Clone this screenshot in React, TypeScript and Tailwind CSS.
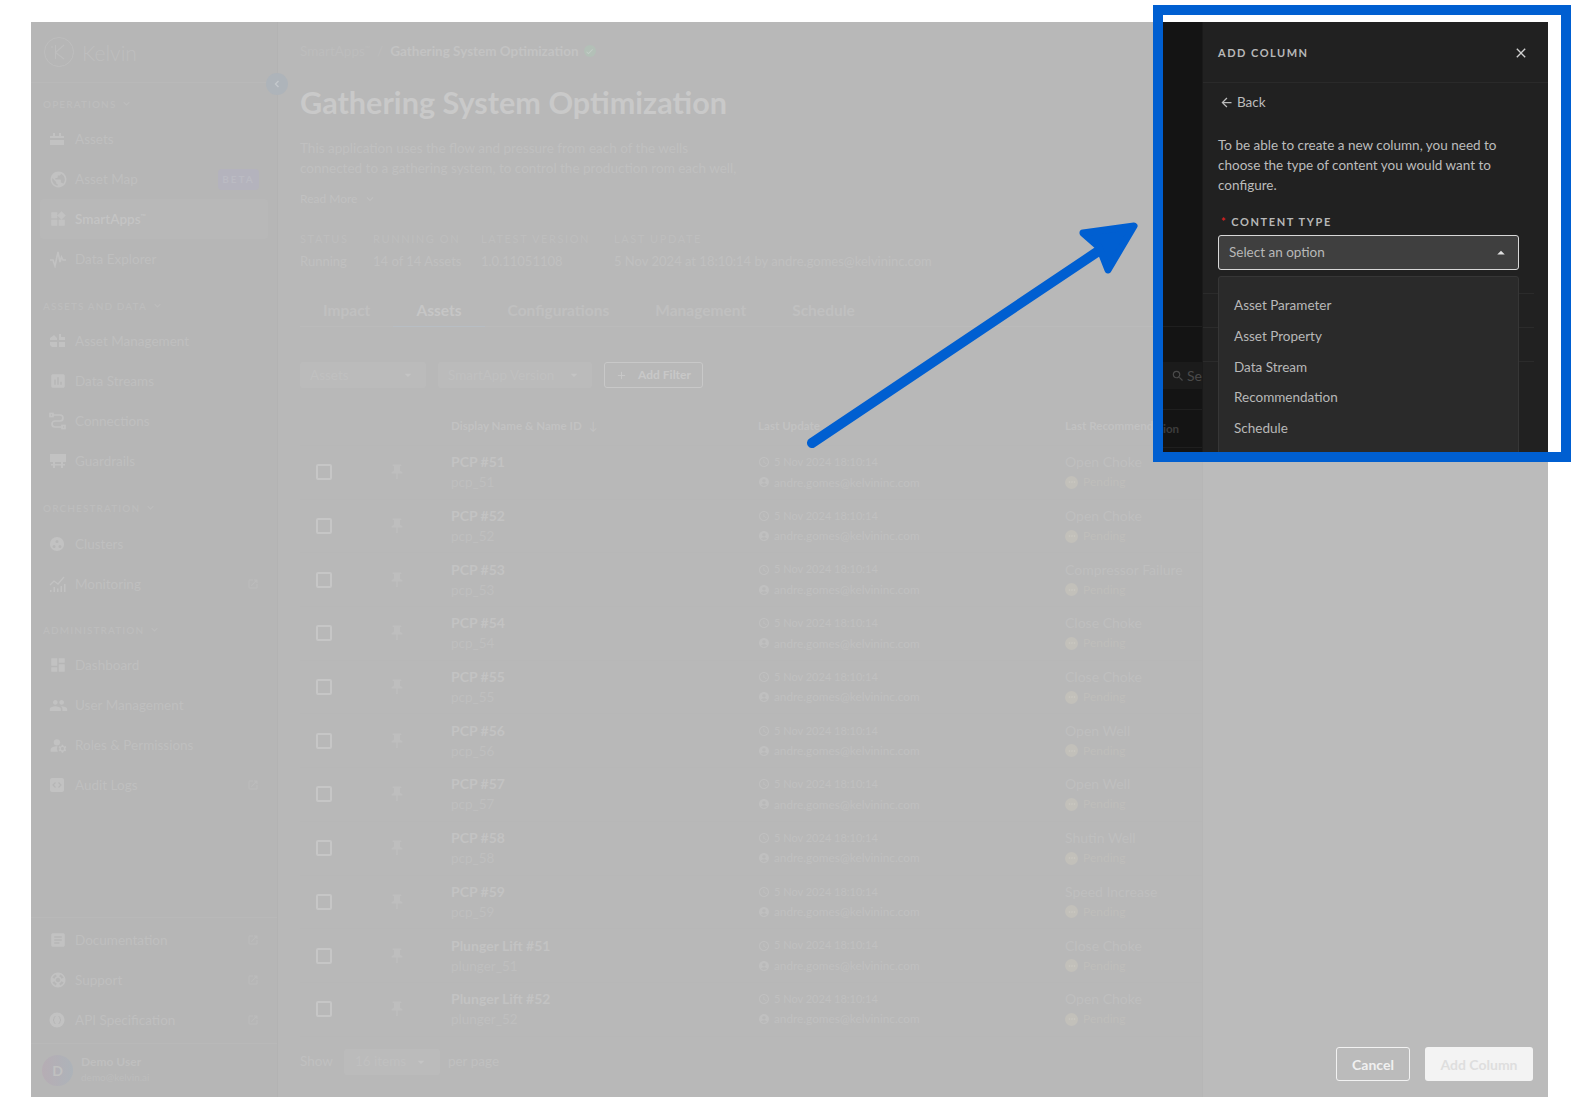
import React from "react";
import {
  MdAccountCircle,
  MdArrowBack,
  MdArrowDropDown,
  MdArrowDropUp,
  MdArticle,
  MdCheck,
  MdClose,
  MdDashboard,
  MdExpandMore,
  MdInsertChart,
  MdManageAccounts,
  MdMoreHoriz,
  MdOpenInNew,
  MdPeople,
  MdPublic,
  MdPushPin,
  MdSchedule,
  MdSearch,
  MdSupport,
  MdWidgets,
} from "react-icons/md";
import { Plus } from "lucide-react";

const FONT = "font-['Lato','Liberation_Sans',sans-serif]";

// ─── ICONS ────────────────────────────────────────────────────────────────────

function AssetsIcon() {
  return (
    <svg viewBox="0 0 16 16" className="h-4 w-4 fill-current">
      <path d="M1 7V5h3V2h2v3h4V2h2v3h3v2H1zM1 9h14v5H1V9z" />
    </svg>
  );
}

function PulseIcon() {
  return (
    <svg viewBox="0 0 18 18" className="h-[18px] w-[18px] fill-none stroke-current" strokeWidth="1.6">
      <path d="M1 10h3l2 6 3-14 2 10 1.5-5 1.5 3h3" />
    </svg>
  );
}

function AssetManagementIcon() {
  return (
    <svg viewBox="0 0 18 18" className="h-[18px] w-[18px] fill-current">
      <path d="M5 3l3 3v2H1V6l4-3zM1 10h7v5H3l-2-2v-3zM10 2h2v3h4v3h-6V2zM10 10h6v5h-6v-5z" />
    </svg>
  );
}

function ConnectionsIcon() {
  return (
    <svg viewBox="0 0 18 18" className="h-[18px] w-[18px] fill-none stroke-current" strokeWidth="1.7">
      <path d="M3 3h8a2.5 2.5 0 0 1 0 6H6a2.5 2.5 0 0 0 0 6h8" />
      <rect x="1" y="1.5" width="3" height="3" />
      <rect x="13" y="13.5" width="3" height="3" />
    </svg>
  );
}

function GuardrailIcon() {
  return (
    <svg viewBox="0 0 18 18" className="h-[18px] w-[18px] fill-current">
      <path d="M1 2h16v8H1V2zM4 10h2v6H4v-6zM12 10h2v6h-2v-6zM2 12h14v1.5H2V12z" />
    </svg>
  );
}

function ClustersIcon() {
  return (
    <svg viewBox="0 0 18 18" className="h-4 w-4 fill-current">
      <path
        fillRule="evenodd"
        d="M9 1a8 8 0 1 1 0 16A8 8 0 0 1 9 1zm0 3.5a1.7 1.7 0 1 0 0 3.4 1.7 1.7 0 0 0 0-3.4zM5.7 10a1.7 1.7 0 1 0 0 3.4 1.7 1.7 0 0 0 0-3.4zm6.6 0a1.7 1.7 0 1 0 0 3.4 1.7 1.7 0 0 0 0-3.4z"
      />
    </svg>
  );
}

function MonitoringIcon() {
  return (
    <svg viewBox="0 0 18 18" className="h-[18px] w-[18px] fill-current">
      <path d="M1 15h1.5v2H1v-2zM4.5 12H6v5H4.5v-5zM8 13.5h1.5V17H8v-3.500zM11.500 11H13v6h-1.500v-6zM15 9h1.500v8H15V9z" />
      <path d="M1 10l4-4 4 3 6-7" fill="none" stroke="currentColor" strokeWidth="1.300" />
    </svg>
  );
}

function CodeBoxIcon() {
  return (
    <svg viewBox="0 0 16 16" className="h-4 w-4">
      <rect x="1" y="1" width="14" height="14" rx="2" fill="currentColor" />
      <path d="M6.500 5.500L4 8l2.500 2.500M9.500 5.500L12 8l-2.500 2.500" fill="none" stroke="#b6b6b6" strokeWidth="1.200" />
    </svg>
  );
}

function ApiIcon() {
  return (
    <svg viewBox="0 0 16 16" className="h-4 w-4">
      <circle cx="8" cy="8" r="7.500" fill="currentColor" />
      <path d="M6.500 4.500Q5 4.500 5 6v1.200L4 8l1 .8V10q0 1.500 1.500 1.500M9.500 4.500Q11 4.500 11 6v1.200L12 8l-1 .8V10q0 1.500-1.500 1.500" fill="none" stroke="#b6b6b6" strokeWidth="1" />
    </svg>
  );
}

function KelvinLogo() {
  return (
    <div className="flex items-center gap-[8px] text-[#bebebe]">
      <svg viewBox="0 0 30 30" className="h-[30px] w-[30px] fill-none stroke-current" strokeWidth="0.9">
        <circle cx="15" cy="15" r="14.500" />
        <path d="M11.500 8v14M20 8l-8.500 7.500L20 22" strokeWidth="1.100" />
        <circle cx="8" cy="10" r="0.500" />
      </svg>
      <span className="text-[21px] leading-none font-light">Kelvin</span>
    </div>
  );
}

function TradeMark() {
  return <span className="align-super text-[7px] leading-none">™</span>;
}

// ─── SIDEBAR ──────────────────────────────────────────────────────────────────

interface NavItem {
  label: string;
  icon: React.ReactNode;
  external?: boolean;
  beta?: boolean;
  active?: boolean;
}

const NAV_GROUPS: { title: string; head: string; items: NavItem[] }[] = [
  {
    title: "OPERATIONS",
    head: "h-[36px] pt-[14px]",
    items: [
      { label: "Assets", icon: <AssetsIcon /> },
      { label: "Asset Map", icon: <MdPublic size={19} />, beta: true },
      { label: "SmartApps", icon: <MdWidgets size={18} />, active: true },
      { label: "Data Explorer", icon: <PulseIcon /> },
    ],
  },
  {
    title: "ASSETS AND DATA",
    head: "h-[42px] pt-[20px]",
    items: [
      { label: "Asset Management", icon: <AssetManagementIcon /> },
      { label: "Data Streams", icon: <MdInsertChart size={18} /> },
      { label: "Connections", icon: <ConnectionsIcon /> },
      { label: "Guardrails", icon: <GuardrailIcon /> },
    ],
  },
  {
    title: "ORCHESTRATION",
    head: "h-[43px] pt-[20px]",
    items: [
      { label: "Clusters", icon: <ClustersIcon /> },
      { label: "Monitoring", icon: <MonitoringIcon />, external: true },
    ],
  },
  {
    title: "ADMINISTRATION",
    head: "h-[41px] pt-[19px]",
    items: [
      { label: "Dashboard", icon: <MdDashboard size={18} /> },
      { label: "User Management", icon: <MdPeople size={19} /> },
      { label: "Roles & Permissions", icon: <MdManageAccounts size={19} /> },
      { label: "Audit Logs", icon: <CodeBoxIcon />, external: true },
    ],
  },
];

const FOOTER_ITEMS: NavItem[] = [
  { label: "Documentation", icon: <MdArticle size={18} />, external: true },
  { label: "Support", icon: <MdSupport size={18} />, external: true },
  { label: "API Specification", icon: <ApiIcon />, external: true },
];

function NavRow({ item }: { item: NavItem }) {
  return (
    <div
      className={`mx-[9px] flex h-10 items-center pl-[9px] pr-[9px] ${
        item.active ? "rounded bg-[#b8b8b8] text-[#c4c4c4]" : "text-[#bfbfbf]"
      }`}
    >
      <span className="flex w-[26px] shrink-0 text-[#c2c2c2]">{item.icon}</span>
      <span className={`text-[13.5px] ${item.active ? "font-semibold" : ""}`}>
        {item.label}
        {item.active && <TradeMark />}
      </span>
      {item.beta && (
        <span className="ml-auto flex h-[21px] w-[41px] items-center justify-center rounded bg-[#b4b3bd] text-[10px] font-bold tracking-[2px] text-[#bbbbc3]">
          BETA
        </span>
      )}
      {item.external && <MdOpenInNew size={12} className="ml-auto text-[#bcbcbc]" />}
    </div>
  );
}

function Sidebar() {
  return (
    <aside className="flex h-full w-[247px] shrink-0 flex-col border-r border-[#b3b3b3] bg-[#b6b6b6]">
      <div className="flex h-[61px] shrink-0 items-center border-b border-[#b9b9b9] pl-[13px]">
        <KelvinLogo />
      </div>
      {NAV_GROUPS.map((group) => (
        <div key={group.title}>
          <div className={`${group.head} pl-[12px]`}>
            <div className="flex items-center gap-1 text-[10px] leading-3 font-semibold tracking-[1.1px] text-[#bdbdbd]">
              {group.title}
              <MdExpandMore size={13} />
            </div>
          </div>
          {group.items.map((item) => (
            <NavRow key={item.label} item={item} />
          ))}
        </div>
      ))}
      <div className="mt-auto border-t border-[#b9b9b9] pt-[2px]">
        {FOOTER_ITEMS.map((item) => (
          <NavRow key={item.label} item={item} />
        ))}
      </div>
      <div className="mt-[3px] flex h-[54px] items-center gap-2 border-t border-[#b9b9b9] pl-[11px]">
        <span className="flex h-[31px] w-[31px] items-center justify-center rounded-full bg-gradient-to-r from-[#b6adb4] to-[#adb3b9] text-[14px] font-bold text-[#c0c0c0]">
          D
        </span>
        <div className="-mt-[4px]">
          <div className="text-[12px] leading-[17px] font-bold text-[#bfbfbf]">Demo User</div>
          <div className="text-[10px] leading-[15px] text-[#bdbdbd]">demo@kelvin.ai</div>
        </div>
      </div>
    </aside>
  );
}

// ─── MAIN ─────────────────────────────────────────────────────────────────────

const ROWS = [
  ["PCP #51", "pcp_51", "Open Choke"],
  ["PCP #52", "pcp_52", "Open Choke"],
  ["PCP #53", "pcp_53", "Compressor Failure"],
  ["PCP #54", "pcp_54", "Close Choke"],
  ["PCP #55", "pcp_55", "Close Choke"],
  ["PCP #56", "pcp_56", "Open Well"],
  ["PCP #57", "pcp_57", "Open Well"],
  ["PCP #58", "pcp_58", "Shutin Well"],
  ["PCP #59", "pcp_59", "Speed Increase"],
  ["Plunger Lift #51", "plunger_51", "Close Choke"],
  ["Plunger Lift #52", "plunger_52", "Open Choke"],
];

const META = [
  { label: "STATUS", value: "Running", width: "w-[73px]" },
  { label: "RUNNING ON", value: "14 of 14 Assets", width: "w-[108px]" },
  { label: "LATEST VERSION", value: "1.0.11051108", width: "w-[133px]" },
  { label: "LAST UPDATE", value: "5 Nov 2024 at 18:10:14 by andre.gomes@kelvininc.com", width: "" },
];

const TABS = ["Impact", "Assets", "Configurations", "Management", "Schedule"];

function TableRow({ name, id, rec }: { name: string; id: string; rec: string }) {
  return (
    <div className="flex h-[53.7px] items-center border-b border-[#b7b7b7]">
      <span className="ml-[16px] h-4 w-4 shrink-0 rounded-[2px] border-2 border-[#c6c6c6]" />
      <MdPushPin size={18} className="ml-[56px] shrink-0 text-[#bebebe]" />
      <div className="ml-[45px] w-[290px] shrink-0">
        <div className="text-[14px] leading-5 font-bold text-[#c3c3c3]">{name}</div>
        <div className="text-[13.5px] leading-5 text-[#bfbfbf]">{id}</div>
      </div>
      <div className="ml-[17px] w-[307px] shrink-0 text-[#c0c0c0]">
        <div className="flex h-5 items-center gap-[4px] text-[11px]">
          <MdSchedule size={12} />
          5 Nov 2024 18:10:14
        </div>
        <div className="flex h-5 items-center gap-[4px] text-[11.8px]">
          <MdAccountCircle size={12} />
          andre.gomes@kelvininc.com
        </div>
      </div>
      <div className="whitespace-nowrap">
        <div className="text-[14px] leading-5 text-[#bfbfbf]">{rec}</div>
        <div className="flex h-5 items-center gap-[5px] text-[12px] text-[#bfbebb]">
          <span className="flex h-[13px] w-[13px] items-center justify-center rounded-full bg-[#c2c0ba]">
            <MdMoreHoriz size={10} className="text-[#cdcac4]" />
          </span>
          Pending
        </div>
      </div>
    </div>
  );
}

function Main() {
  return (
    <main className="h-full w-[924px] shrink-0 overflow-hidden bg-[#b8b8b8] pl-[22px]">
      <div className="mt-[19px] flex h-5 items-center text-[13.5px] whitespace-nowrap text-[#bdbdbd]">
        <span>
          SmartApps
          <TradeMark />
        </span>
        <span className="mx-[7px]">/</span>
        <span className="font-bold text-[#c3c3c3]">Gathering System Optimization</span>
        <span className="ml-[5px] flex h-3 w-3 items-center justify-center rounded-full bg-[#b3c0b7]">
          <MdCheck size={9} className="text-[#c4cec7]" />
        </span>
      </div>
      <h1 className="mt-[22px] h-10 text-[30.6px] leading-10 font-bold text-[#c9c9c9]">Gathering System Optimization</h1>
      <p className="mt-[15px] w-[445px] text-[13.5px] leading-5 text-[#c0c0c0]">
        This application uses the flow and pressure from each of the wells connected to a gathering system, to control the production rom each well,
      </p>
      <div className="mt-[11px] flex h-5 items-center gap-[6px] text-[12px] text-[#c1c1c1]">
        Read More
        <MdExpandMore size={14} />
      </div>
      <div className="mt-[23px] flex">
        {META.map((m) => (
          <div key={m.label} className={`${m.width} shrink-0`}>
            <div className="h-[14px] text-[11px] leading-[14px] tracking-[1.6px] text-[#bebebe]">{m.label}</div>
            <div className="mt-[5px] text-[13px] leading-5 text-[#c0c0c0]">{m.value}</div>
          </div>
        ))}
      </div>
      <div className="mt-[24px] flex h-[32px] border-b border-[#bbbbbb]">
        {TABS.map((tab) => (
          <div
            key={tab}
            className={`-mb-px flex h-[32px] items-center border-b px-[23px] text-[15.5px] font-bold ${
              tab === "Assets" ? "border-[#b8bec4] text-[#c6c6c6]" : "border-transparent text-[#c0c0c0]"
            }`}
          >
            {tab}
          </div>
        ))}
      </div>
      <div className="mt-[35px] flex h-[26px] gap-3 text-[13.5px] text-[#c0c0c0]">
        <div className="flex w-[126px] items-center justify-between rounded-[3px] bg-[#bbbbbb] pl-[10px] pr-[10px]">
          Assets
          <MdArrowDropDown size={16} className="text-[#c4c4c4]" />
        </div>
        <div className="flex w-[154px] items-center justify-between rounded-[3px] bg-[#bbbbbb] pl-[10px] pr-[10px]">
          SmartApp Version
          <MdArrowDropDown size={16} className="text-[#c4c4c4]" />
        </div>
        <div className="flex w-[99px] items-center justify-center gap-[11px] rounded-[3px] border border-[#c8c8c8] text-[12px] font-bold text-[#c8c8c8]">
          <Plus size={11} strokeWidth={2} />
          Add Filter
        </div>
      </div>
      <div className="mt-[18px]">
        <div className="flex h-10 items-center border-b border-[#b7b7b7] text-[11.6px] font-bold whitespace-nowrap text-[#c2c2c2]">
          <span className="ml-[151px] w-[290px]">
            Display Name &amp; Name ID <span className="ml-1 font-normal">↓</span>
          </span>
          <span className="ml-[17px] w-[307px]">Last Update</span>
          <span>Last Recommendation</span>
        </div>
        {ROWS.map(([name, id, rec]) => (
          <TableRow key={id} name={name} id={id} rec={rec} />
        ))}
      </div>
      <div className="mt-[12px] flex h-[26px] items-center text-[13.5px] text-[#c0c0c0]">
        Show
        <div className="ml-[11px] flex h-[26px] w-[96px] items-center justify-between rounded-[3px] bg-[#bbbbbb] px-[11px]">
          16 items
          <MdArrowDropDown size={16} className="text-[#c4c4c4]" />
        </div>
        <span className="ml-[8px]">per page</span>
      </div>
    </main>
  );
}

function GrayPanel() {
  return (
    <div className="flex h-full w-[346px] shrink-0 flex-col justify-end border-l border-[#b6b6b6] bg-[#bbbbbb]">
      <div className="mb-4 flex justify-end gap-[15px] pr-[15px]">
        <button className="h-[34px] w-[74px] rounded-[3px] border border-[#f2f2f2] text-[14px] font-bold text-[#f0f0f0]">
          Cancel
        </button>
        <button className="h-[34px] w-[108px] rounded-[3px] bg-[#f3f3f3] text-[14px] font-bold text-[#dedede]">
          Add Column
        </button>
      </div>
    </div>
  );
}

// ─── CALLOUT ──────────────────────────────────────────────────────────────────

const OPTIONS = ["Asset Parameter", "Asset Property", "Data Stream", "Recommendation", "Schedule"];

function Callout() {
  return (
    <div className="absolute left-[1153px] top-[5px] h-[457px] w-[418px] border-10 border-[#005fd1] bg-white pt-[7px]">
      <div className="flex h-[430px] w-[385px] overflow-hidden">
        <div className="w-[39px] shrink-0 bg-[#141414]">
          <div className="mt-[304px] h-px bg-[#1f1f1f]" />
          <div className="mt-[35px] flex h-[27px] items-center gap-[2px] bg-[#1b1b1b] pl-[8px] text-[14px] text-[#4a4a4a]">
            <MdSearch size={14} className="shrink-0" />
            Se
          </div>
          <div className="mt-[20px] h-px bg-[#1f1f1f]" />
          <div className="mt-[11px] text-[11.6px] leading-4 font-bold text-[#3d3d3d]">ion</div>
          <div className="mt-[10px] h-px bg-[#1f1f1f]" />
        </div>
        <div className="relative flex-1 border-l border-[#1a1a1a] bg-[#212121]">
          <div className="flex h-[61px] items-center justify-between border-b border-[#2a2a2a] pl-[15px] pr-[19px] pt-[2px]">
            <span className="text-[11px] font-bold tracking-[1.5px] text-[#b8b8b8]">ADD COLUMN</span>
            <MdClose size={16} className="text-[#d0d0d0]" />
          </div>
          <div className="px-[15px]">
            <div className="mt-[9px] flex h-5 items-center gap-[3px] pl-px text-[13.5px] text-[#bcbcbc]">
              <MdArrowBack size={15} />
              Back
            </div>
            <p className="mt-[23px] text-[13.5px] leading-5 text-[#bcbcbc]">
              To be able to create a new column, you need to choose the type of content you would want to configure.
            </p>
            <div className="mt-[20px] flex h-[14px] items-center pl-[3px] text-[11px] font-bold tracking-[1.6px] text-[#b8b8b8]">
              <span className="mr-[4px] text-[#d42020]">*</span>
              CONTENT TYPE
            </div>
            <div className="mt-[6px] flex h-[35px] w-[301px] items-center justify-between rounded-[3px] border border-[#d8d8d8] bg-[#3f3f3f] pl-[10px] pr-[8px] text-[13.5px] text-[#b8b8b8]">
              Select an option
              <MdArrowDropUp size={18} className="text-[#e0e0e0]" />
            </div>
          </div>
          <div className="mr-[14px] mt-[23px] border-t border-[#2b2b2b]" />
          <div className="mr-[14px] mt-[33px] border-t border-[#2b2b2b]" />
          <div className="mr-[14px] mt-[33px] border-t border-[#2b2b2b]" />
          <div className="absolute left-[15px] top-[254px] h-[200px] w-[301px] rounded-[3px] border border-[#363636] bg-[#2a2a2a] pt-[13px] text-[13.5px] text-[#b8b8b8]">
            {OPTIONS.map((opt) => (
              <div key={opt} className="flex h-[30.7px] items-center pl-[15px]">
                {opt}
              </div>
            ))}
          </div>
        </div>
      </div>
    </div>
  );
}

function Arrow() {
  return (
    <svg className="pointer-events-none absolute left-0 top-0" width="1580" height="1120">
      <path d="M812 443L1100 250" stroke="#005fd1" strokeWidth="10" strokeLinecap="round" fill="none" />
      <path
        d="M1134 226L1083 233L1099 247L1108 270Z"
        fill="#005fd1"
        stroke="#005fd1"
        strokeWidth="7"
        strokeLinejoin="round"
      />
    </svg>
  );
}

export default function App() {
  return (
    <div className={`${FONT} relative h-[1120px] w-[1580px] overflow-hidden bg-white pl-[31px] pt-[22px]`}>
      <div className="flex h-[1075px] w-[1517px]">
        <Sidebar />
        <Main />
        <GrayPanel />
      </div>
      {/* collapse toggle on the sidebar edge */}
      <span className="absolute left-[266px] top-[73px] flex h-[22px] w-[22px] items-center justify-center rounded-full bg-[#aeb4ba] text-[#c4c8cc]">
        <svg viewBox="0 0 8 8" className="h-2 w-2 fill-none stroke-current" strokeWidth="1.4">
          <path d="M5.500 1L2.500 4l3 3" />
        </svg>
      </span>
      <Callout />
      <Arrow />
    </div>
  );
}
